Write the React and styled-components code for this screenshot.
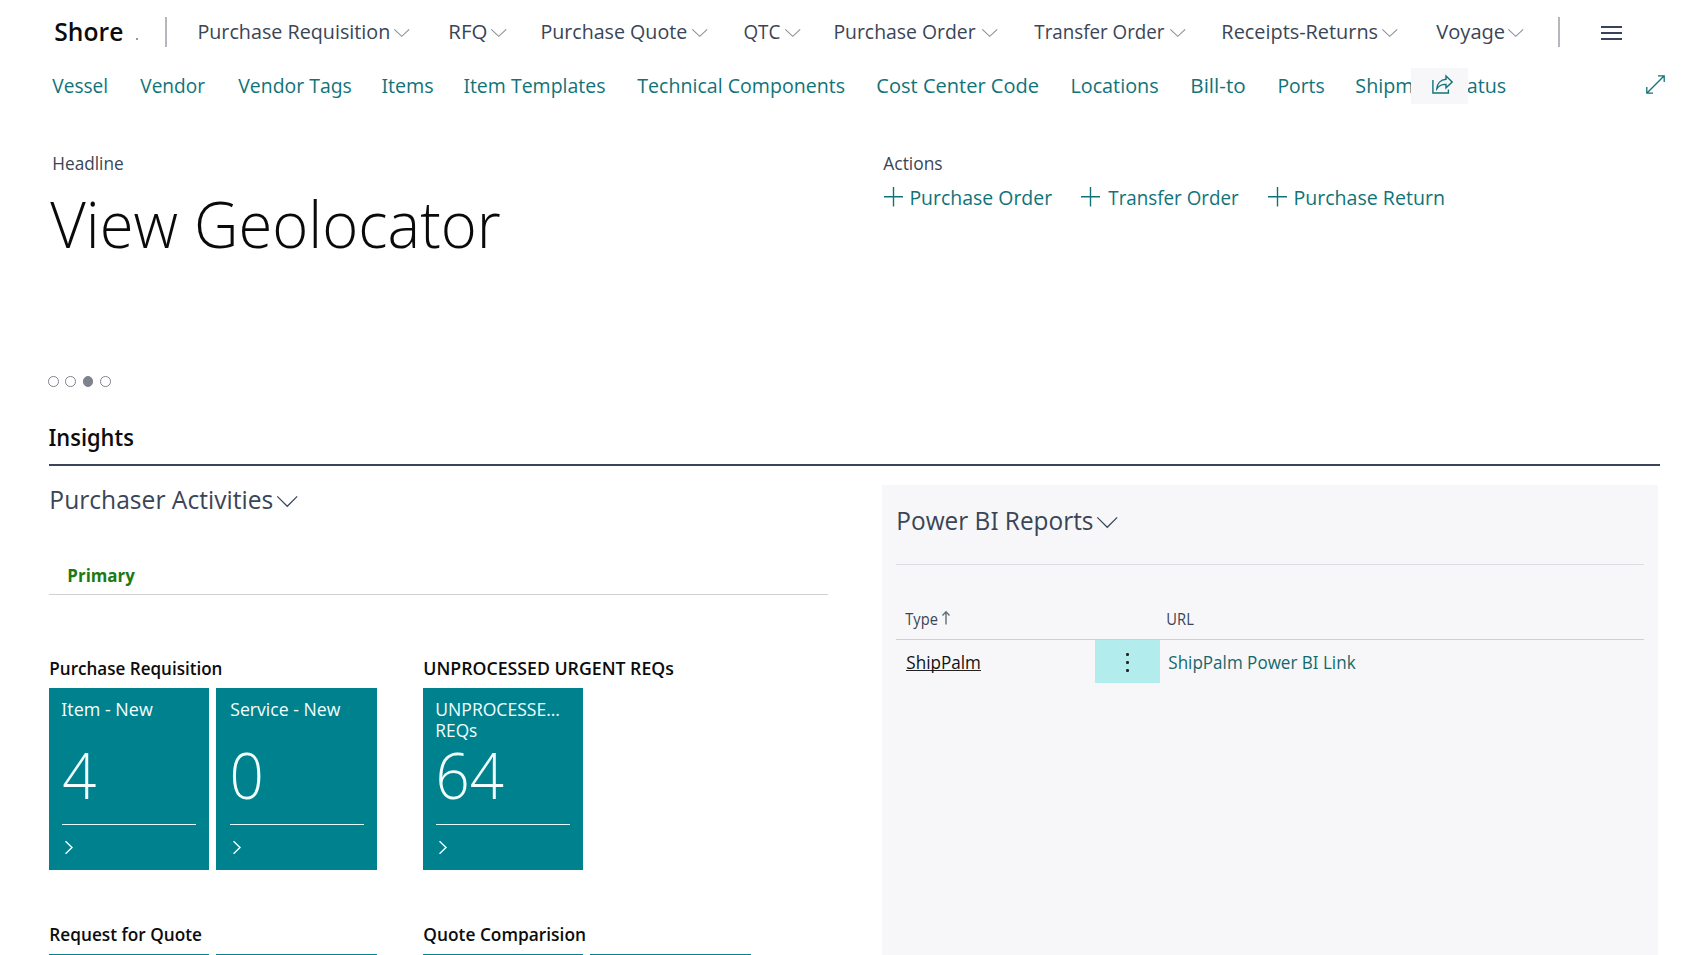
import React, { useLayoutEffect, useRef, useState } from "react";
import styled, { createGlobalStyle } from "styled-components";

const ink = "#3a4556";
const teal = "#10737a";
const tileTeal = "#00828e";

const GlobalStyle = createGlobalStyle`
  * { box-sizing: border-box; }
  body {
    margin: 0;
    background: #fff;
    font-family: "Open Sans", "Noto Sans", sans-serif;
    font-feature-settings: "ss01";
    overflow: hidden;
  }
`;

const Page = styled.div`
  width: 1698px;
  height: 955px;
  overflow: hidden;
  background: #fff;
`;

/* A single line of text condensed to an exact visible width. */
const FitBox = styled.span`
  display: block;
  flex: none;
  width: ${(p) => p.$w}px;
  height: ${(p) => p.$lh}px;
  line-height: ${(p) => p.$lh}px;
  font-size: ${(p) => p.$size}px;
  font-weight: ${(p) => p.$weight || 400};
  color: ${(p) => p.$color || "inherit"};
  white-space: nowrap;
`;

const FitInner = styled.span`
  display: inline-block;
  transform-origin: 0 50%;
`;

function Fit({ w, size, lh = 30, weight, color, children }) {
  const ref = useRef(null);
  const [transform, setTransform] = useState("none");
  useLayoutEffect(() => {
    const cs = getComputedStyle(ref.current);
    const ctx = document.createElement("canvas").getContext("2d");
    ctx.font = `${cs.fontWeight} ${cs.fontSize} ${cs.fontFamily}`;
    const m = ctx.measureText(children);
    const k = (w - 0.6) / (m.actualBoundingBoxLeft + m.actualBoundingBoxRight);
    setTransform(`translateX(${m.actualBoundingBoxLeft * k + 0.3}px) scaleX(${k})`);
  }, [children, w, size, weight]);
  return (
    <FitBox $w={w} $size={size} $lh={lh} $weight={weight} $color={color}>
      <FitInner ref={ref} style={{ transform }}>{children}</FitInner>
    </FitBox>
  );
}

const Svg = styled.svg`
  display: block;
  flex: none;
  fill: none;
  overflow: visible;
`;

const ChevronDown = ({ w = 15.5, h = 7.8, color = "#8b9097", stroke = 1.1 }) => (
  <Svg width={w} height={h} viewBox={`0 0 ${w} ${h}`} stroke={color} strokeWidth={stroke}>
    <path d={`M0.3 0.3 L${w / 2} ${h - 0.5} L${w - 0.3} 0.3`} />
  </Svg>
);

/* Top navigation */
const TopBar = styled.header`
  display: flex;
  align-items: center;
  height: 64px;
  padding: 0 0 2px 55px;
`;

const Brand = styled.div`
  display: flex;
  align-items: center;
  width: 110px;
`;

const BrandDot = styled.i`
  width: 1.5px;
  height: 1.5px;
  margin: 16px 0 0 13px;
  background: #999;
`;

const Divider = styled.i`
  flex: none;
  width: 1.5px;
  height: 30px;
  margin-top: 1px;
  background: #b4b8bd;
`;

const Menu = styled.nav`
  display: flex;
  width: ${(p) => p.$w}px;
  padding-left: ${(p) => p.$pad}px;
  color: ${ink};
`;

const MenuItem = styled.a`
  display: flex;
  flex: none;
  align-items: center;
  gap: 4.8px;
  width: ${(p) => p.$cell}px;
  svg { margin-top: 4px; }
`;

const Burger = styled.div`
  display: flex;
  flex-direction: column;
  gap: 4px;
  width: 21px;
  margin: 4px 0 0 41px;
  i { height: 2px; background: #38435a; }
`;

const menu = [
  ["Purchase Requisition", 190, 250.6],
  ["RFQ", 36.7, 92],
  ["Purchase Quote", 145, 202],
  ["QTC", 36.7, 91.6],
  ["Purchase Order", 141.4, 198.2],
  ["Transfer Order", 131.3, 189.4],
  ["Receipts-Returns", 154.6, 213],
  ["Voyage", 67.5, 90],
];

/* Secondary links */
const LinkBar = styled.nav`
  position: relative;
  display: flex;
  align-items: center;
  height: 44px;
  padding: 0 0 3px 52px;
  color: ${teal};
`;

const LinkItem = styled.a`
  flex: none;
  width: ${(p) => p.$cell}px;
`;

const links = [
  ["Vessel", 55.3, 88],
  ["Vendor", 65.8, 97.8],
  ["Vendor Tags", 112, 145.5],
  ["Items", 49.2, 82.2],
  ["Item Templates", 139, 171.5],
  ["Technical Components", 207.5, 240.2],
  ["Cost Center Code", 161.8, 195],
  ["Locations", 86.2, 119.6],
  ["Bill-to", 53.6, 86.9],
  ["Ports", 45.2, 77.4],
  ["Shipment Status", 149.7, 290],
];

const ShareButton = styled.button`
  position: absolute;
  left: 1411px;
  top: 4px;
  display: grid;
  place-items: center;
  width: 56.5px;
  height: 35.5px;
  padding: 0 0 2px 7px;
  border: 0;
  background: #f7f7f9;
`;

/* Headline and actions */
const Hero = styled.section`
  display: flex;
  height: 268px;
  padding-top: 40px;
`;

const HeadlineCol = styled.div`
  width: 883px;
  padding-left: 53.3px;
`;

const Title = styled.h1`
  margin: 0 0 0 -3.7px;
  padding-top: 6px;
  height: 198px;
`;

const Dots = styled.div`
  display: flex;
  gap: 6.5px;
  margin-left: -5px;
`;

const Dot = styled.i`
  width: 10.7px;
  height: 10.7px;
  border: 1.3px solid #7d838d;
  border-radius: 50%;
  background: ${(p) => (p.$on ? "#7d838d" : "transparent")};
`;

const ActionRow = styled.div`
  display: flex;
  padding: 4px 0 0 1px;
  color: ${teal};
`;

const Action = styled.a`
  display: flex;
  flex: none;
  align-items: center;
  gap: 8px;
  width: ${(p) => p.$cell}px;
`;

const actions = [
  ["Purchase Order", 142, 197.2],
  ["Transfer Order", 131.5, 187],
  ["Purchase Return", 148.7, 180],
];

/* Insights */
const Insights = styled.section`
  margin: 0 38px 0 48.6px;
`;

const InsightsHead = styled.h2`
  margin: 0;
  height: 90px;
  padding: 46px 0 0 1.2px;
  border-bottom: 2.6px solid #3a455a;
`;

const Columns = styled.div`
  display: flex;
  justify-content: space-between;
`;

const Activities = styled.div`
  width: 779px;
  padding-top: 13px;
`;

const SectionTitle = styled.h3`
  display: flex;
  align-items: center;
  gap: 5px;
  margin: 0;
  padding-left: 2px;
  color: ${ink};
  svg { margin-top: 4px; }
`;

const Tab = styled.div`
  height: 58px;
  margin-top: 18px;
  padding: 25px 0 0 19.5px;
  border-bottom: 1px solid #cfd1d4;
`;

const Groups = styled.div`
  display: grid;
  grid-template-columns: 374px 1fr;
  row-gap: 49px;
  padding-top: 58px;
`;

const GroupHead = styled.h4`
  margin: 0;
  height: 35px;
  padding-left: 1px;
`;

const Tiles = styled.div`
  display: flex;
  gap: 7.4px;
`;

const Tile = styled.div`
  display: flex;
  flex-direction: column;
  width: 160.5px;
  height: 182px;
  padding: 11px 13.3px 0 13.6px;
  background: ${tileTeal};
  color: #f2ffff;
`;

const TileLabel = styled.div`
  height: 42px;
`;

const TileValue = styled.div`
  height: 83px;
  padding-left: ${(p) => p.$pad}px;
`;

const TileFoot = styled.div`
  padding: 16px 0 0 3px;
  border-top: 1.3px solid #e4ffff;
`;

const groups = [
  {
    title: ["Purchase Requisition", 171.5],
    tiles: [
      { lines: [["Item - New", 90]], value: ["4", 33, 0.7] },
      { lines: [["Service - New", 110.5]], value: ["0", 29.5, 1.7] },
    ],
  },
  {
    title: ["UNPROCESSED URGENT REQs", 249.5],
    tiles: [{ lines: [["UNPROCESSE...", 123.5], ["REQs", 41]], value: ["64", 64.5, 2.7] }],
  },
  { title: ["Request for Quote", 152], tiles: [{ lines: [] }, { lines: [] }] },
  { title: ["Quote Comparision", 161], tiles: [{ lines: [] }, { lines: [] }] },
];

/* Power BI panel */
const Panel = styled.aside`
  width: 776px;
  height: 480px;
  margin: 19px 2px 0 0;
  padding: 19px 14px 0;
  background: #f7f7f9;
`;

const PanelHead = styled.div`
  height: 61px;
  border-bottom: 1.6px solid #dcdde0;
`;

const TableRow = styled.div`
  display: grid;
  grid-template-columns: 199px 65px 1fr;
  height: ${(p) => p.$h}px;
  align-items: ${(p) => p.$align || "center"};
  ${(p) => p.$line && "border-bottom: 1px solid #cdd0d5;"}
`;

const Cell = styled.div`
  display: flex;
  gap: 4px;
  padding: ${(p) => p.$top || 0}px 0 0 ${(p) => p.$pad}px;
`;

const RecordLink = styled.a`
  color: #111;
  border-bottom: 1.5px solid #222;
  height: 22px;
  margin-top: -3px;
`;

const MoreCell = styled.button`
  display: flex;
  flex-direction: column;
  align-items: center;
  justify-content: center;
  gap: 5.4px;
  height: 43px;
  padding: 2px 0 0;
  border: 0;
  background: #b3ecec;
  i { width: 2.6px; height: 2.6px; border-radius: 50%; background: #222; }
`;

export default function App() {
  return (
    <Page>
      <GlobalStyle />
      <TopBar>
        <Brand>
          <Fit w={68} size={25.5} weight={600} color="#0c0c0c">Shore</Fit>
          <BrandDot />
        </Brand>
        <Divider />
        <Menu $w={1391.5} $pad={32.8}>
          {menu.map(([label, w, cell]) => (
            <MenuItem key={label} $cell={cell}>
              <Fit w={w} size={20.6}>{label}</Fit>
              <ChevronDown />
            </MenuItem>
          ))}
        </Menu>
        <Divider />
        <Burger><i /><i /><i /></Burger>
      </TopBar>

      <LinkBar>
        {links.map(([label, w, cell]) => (
          <LinkItem key={label} $cell={cell}>
            <Fit w={w} size={20.6}>{label}</Fit>
          </LinkItem>
        ))}
        <ShareButton>
          <Svg width="21" height="19" viewBox="0 0 21 19" stroke={teal} strokeWidth="1.4">
            <path d="M0.9 5V18H16.4V14.6" />
            <path d="M14 1 L20.2 6.9 L14 12.8 V9.4 C10 9.2 7 10.6 4.8 13.8 C5.2 8.4 8.6 4.6 14 4.3 Z" />
          </Svg>
        </ShareButton>
        <Svg width="19" height="19" viewBox="0 0 19 19" stroke={teal} strokeWidth="1.3">
          <path d="M1 18 L18 1 M12 0.8 H18.2 V7 M0.8 12 V18.2 H7" />
        </Svg>
      </LinkBar>

      <Hero>
        <HeadlineCol>
          <Fit w={71} size={17.8} color={ink}>Headline</Fit>
          <Title>
            <Fit w={451} size={64.5} lh={78} weight={300} color="#0a0a0a">View Geolocator</Fit>
          </Title>
          <Dots><Dot /><Dot /><Dot $on /><Dot /></Dots>
        </HeadlineCol>
        <div>
          <Fit w={59.5} size={17.8} color={ink}>Actions</Fit>
          <ActionRow>
            {actions.map(([label, w, cell]) => (
              <Action key={label} $cell={cell}>
                <Svg width="19" height="19.5" viewBox="0 0 19 19.5" stroke={teal} strokeWidth="1.4">
                  <path d="M9.5 0V19.5M0 9.75H19" />
                </Svg>
                <Fit w={w} size={20.6}>{label}</Fit>
              </Action>
            ))}
          </ActionRow>
        </div>
      </Hero>

      <Insights>
        <InsightsHead>
          <Fit w={81} size={23.4} weight={600} color="#0c0c0c">Insights</Fit>
        </InsightsHead>
        <Columns>
          <Activities>
            <SectionTitle>
              <Fit w={221.5} size={25.2} lh={40}>Purchaser Activities</Fit>
              <ChevronDown w={20.5} h={10.8} color={ink} stroke={1.2} />
            </SectionTitle>
            <Tab>
              <Fit w={68} size={17.8} lh={26} weight={700} color="#1c7a12">Primary</Fit>
            </Tab>
            <Groups>
              {groups.map((g) => (
                <div key={g.title[0]}>
                  <GroupHead>
                    <Fit w={g.title[1]} size={17.8} weight={600} color="#0c0c0c">{g.title[0]}</Fit>
                  </GroupHead>
                  <Tiles>
                    {g.tiles.map((t, i) => (
                      <Tile key={i}>
                        <TileLabel>
                          {t.lines.map(([s, w]) => (
                            <Fit key={s} w={w} size={18.2} lh={21}>{s}</Fit>
                          ))}
                        </TileLabel>
                        {t.value && (
                          <>
                            <TileValue $pad={t.value[2]}>
                              <Fit w={t.value[1]} size={64.5} lh={66} weight={300}>{t.value[0]}</Fit>
                            </TileValue>
                            <TileFoot>
                              <Svg width="8" height="13" viewBox="0 0 8 13" stroke="#eaffff" strokeWidth="1.4">
                                <path d="M0.5 0.3 L7 6.5 L0.5 12.7" />
                              </Svg>
                            </TileFoot>
                          </>
                        )}
                      </Tile>
                    ))}
                  </Tiles>
                </div>
              ))}
            </Groups>
          </Activities>

          <Panel>
            <PanelHead>
              <SectionTitle>
                <Fit w={193.5} size={25.2} lh={32}>Power BI Reports</Fit>
                <ChevronDown w={20.5} h={10.8} color={ink} stroke={1.2} />
              </SectionTitle>
            </PanelHead>
            <TableRow $h={75} $line $align="end">
              <Cell $pad={9}>
                <Fit w={32.5} size={15.6} lh={40} color={ink}>Type</Fit>
                <Svg width="8" height="40" viewBox="0 0 8 40" stroke="#666d78" strokeWidth="1.4">
                  <path d="M4 13 V25.4 M0.5 16.5 L4 12.8 L7.5 16.5" />
                </Svg>
              </Cell>
              <span />
              <Cell $pad={7}><Fit w={27} size={15.6} lh={40} color={ink}>URL</Fit></Cell>
            </TableRow>
            <TableRow $h={43}>
              <Cell $pad={10}>
                <RecordLink><Fit w={74.5} size={18} lh={26}>ShipPalm</Fit></RecordLink>
              </Cell>
              <MoreCell><i /><i /><i /></MoreCell>
              <Cell $pad={8.2} $top={1}><Fit w={187.5} size={18} lh={26} color="#13686c">ShipPalm Power BI Link</Fit></Cell>
            </TableRow>
          </Panel>
        </Columns>
      </Insights>
    </Page>
  );
}
